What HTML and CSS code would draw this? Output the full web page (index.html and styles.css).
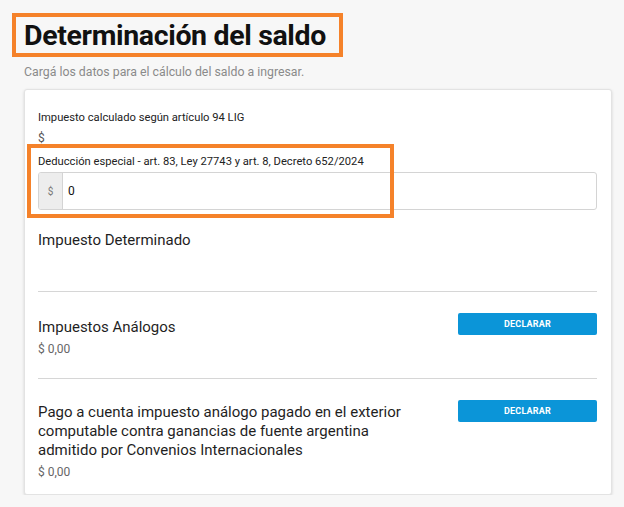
FILE: index.html
```html
<!DOCTYPE html>
<html lang="es">
<head>
<meta charset="utf-8">
<link rel="stylesheet" href="styles.css">
</head>
<body>
<div class="page">
  <div class="header">
    <h1 class="title">Determinación del saldo</h1>
    <div class="hl hl-title"></div>
  </div>
  <p class="subtitle">Cargá los datos para el cálculo del saldo a ingresar.</p>
  <div class="card">
    <div class="field">
      <div class="label">Impuesto calculado según artículo 94 LIG</div>
      <div class="value">$</div>
    </div>
    <div class="field field-input">
      <div class="label">Deducción especial - art. 83, Ley 27743 y art. 8, Decreto 652/2024</div>
      <div class="input-group">
        <span class="prefix">$</span>
        <span class="input">0</span>
      </div>
      <div class="hl hl-field"></div>
    </div>
    <div class="section section-first">
      <div class="section-text">
        <div class="section-title">Impuesto Determinado</div>
      </div>
    </div>
    <div class="section">
      <div class="section-text">
        <div class="section-title">Impuestos Análogos</div>
        <div class="amount">$ 0,00</div>
      </div>
      <button class="btn">DECLARAR</button>
    </div>
    <div class="section section-last">
      <div class="section-text">
        <div class="section-title">Pago a cuenta impuesto análogo pagado en el exterior computable contra ganancias de fuente argentina admitido por Convenios Internacionales</div>
        <div class="amount">$ 0,00</div>
      </div>
      <button class="btn">DECLARAR</button>
    </div>
  </div>
</div>
</body>
</html>
```
FILE: styles.css
```css
html, body {
  margin: 0;
  padding: 0;
  background: #f7f7f7;
  font-family: Roboto, "Liberation Sans", sans-serif;
  color: #1a1a1a;
}
.page {
  padding: 18px 12px 0 24px;
}
.header {
  position: relative;
}
.title {
  margin: 0;
  font-size: 28.5px;
  line-height: 36px;
  font-weight: 700;
  letter-spacing: -0.35px;
  color: #111;
}
.hl {
  position: absolute;
  border: 4px solid #f5822a;
  pointer-events: none;
}
.hl-title {
  left: -12px;
  top: -5px;
  width: 323px;
  height: 36px;
}
.subtitle {
  margin: 10px 0 0;
  font-size: 12.3px;
  line-height: 16px;
  color: #8a8a8a;
}
.card {
  margin-top: 9px;
  background: #fff;
  border: 1px solid #e3e3e3;
  border-radius: 3px;
  box-shadow: 0 1px 3px rgba(0,0,0,0.15);
  padding: 21px 14px 14px 13px;
}
.field .label {
  font-size: 11.2px;
  line-height: 14px;
  color: #222;
}
.field .value {
  margin-top: 5px;
  font-size: 12px;
  line-height: 16px;
  color: #555;
}
.field-input {
  position: relative;
  margin-top: 9px;
}
.hl-field {
  left: -11px;
  top: -11px;
  width: 359px;
  height: 66px;
}
.input-group {
  margin-top: 3px;
  display: flex;
  height: 36px;
  border: 1px solid #d4d4d4;
  border-radius: 3px;
  overflow: hidden;
}
.prefix {
  width: 23px;
  background: #ededed;
  border-right: 1px solid #d4d4d4;
  color: #777;
  font-size: 10px;
  display: flex;
  align-items: center;
  justify-content: center;
}
.input {
  flex: 1;
  display: flex;
  align-items: center;
  padding-left: 5px;
  font-size: 12px;
  color: #111;
}
.section {
  display: flex;
  justify-content: space-between;
  align-items: flex-start;
  border-top: 1px solid #d6d6d6;
  padding: 21px 0 21px;
}
.section .section-text {
  margin-top: 5px;
}
.section-first {
  border-top: none;
  padding: 21px 0 41px;
}
.section.section-first .section-text {
  margin-top: 0;
}
.section.section-last {
  padding-bottom: 0;
}
.section.section-last .section-text {
  margin-top: 3px;
}
.section-text {
  max-width: 370px;
}
.section-title {
  font-size: 15px;
  line-height: 19px;
  color: #1f1f1f;
}
.amount {
  margin-top: 5px;
  font-size: 12px;
  line-height: 15px;
  color: #666;
}
.btn {
  width: 139px;
  height: 22px;
  background: #0b95d8;
  color: #fff;
  border: none;
  border-radius: 2px;
  font-family: Roboto, "Liberation Sans", sans-serif;
  font-size: 9px;
  font-weight: 700;
  letter-spacing: 0.2px;
  padding: 0;
}
```
